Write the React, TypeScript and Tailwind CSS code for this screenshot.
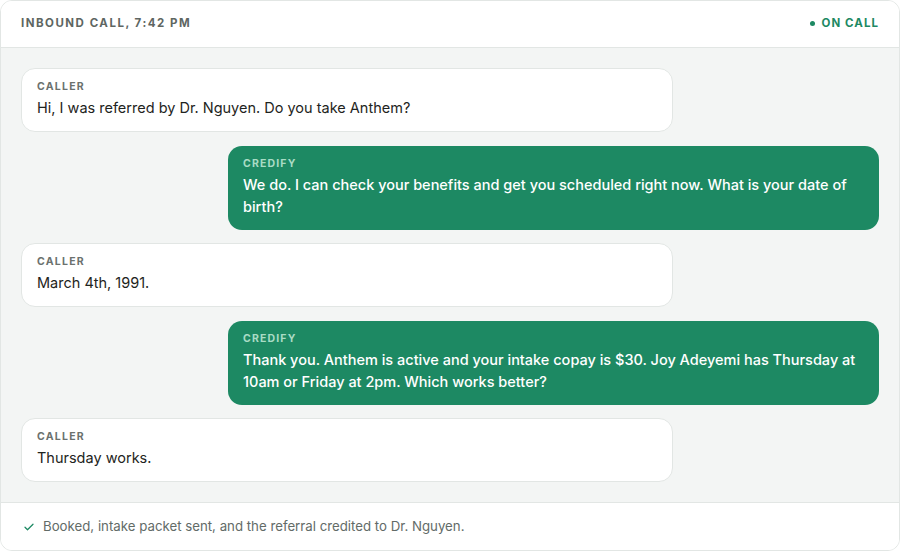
import React from "react";

type Msg = { from: "caller" | "credify"; text: string };

const messages: Msg[] = [
  { from: "caller", text: "Hi, I was referred by Dr. Nguyen. Do you take Anthem?" },
  {
    from: "credify",
    text: "We do. I can check your benefits and get you scheduled right now. What is your date of birth?",
  },
  { from: "caller", text: "March 4th, 1991." },
  {
    from: "credify",
    text: "Thank you. Anthem is active and your intake copay is $30. Joy Adeyemi has Thursday at 10am or Friday at 2pm. Which works better?",
  },
  { from: "caller", text: "Thursday works." },
];

function Bubble({ msg }: { msg: Msg }) {
  if (msg.from === "credify") {
    return (
      <div className="flex justify-end">
        <div className="w-[651px] rounded-[14px] bg-[#1d8963] px-[15px] pt-[11px] pb-[12px]">
          <div className="text-[10.5px] font-bold tracking-[0.11em] text-[#a9dcc5] leading-[14px]">CREDIFY</div>
          <p className="mt-[3px] text-[14.5px] leading-[22px] text-white font-medium">{msg.text}</p>
        </div>
      </div>
    );
  }
  return (
    <div className="flex justify-start">
      <div className="w-[652px] rounded-[14px] border border-[#e2e6e4] bg-white px-[15px] pt-[11px] pb-[12px]">
        <div className="text-[10.5px] font-bold tracking-[0.12em] text-[#6b716e] leading-[14px]">CALLER</div>
        <p className="mt-[3px] text-[14.5px] leading-[22px] text-[#1e2421]">{msg.text}</p>
      </div>
    </div>
  );
}

export default function App() {
  return (
    <div className="h-[551px] w-[900px] bg-white font-['Inter',sans-serif]">
      <div className="flex h-[551px] flex-col overflow-hidden rounded-[12px] border border-[#e2e6e4]">
        <header className="flex h-[47px] shrink-0 items-center justify-between border-b border-[#e2e6e4] bg-white px-[20px]">
          <span className="-mt-[1px] text-[11.5px] font-bold tracking-[0.13em] text-[#5e6662]">INBOUND CALL, 7:42 PM</span>
          <span className="-mt-[1px] flex items-center gap-[7px] text-[11.5px] font-bold tracking-[0.09em] text-[#1d8963]">
            <span className="h-[5px] w-[5px] rounded-full bg-[#1d8963]" />
            ON CALL
          </span>
        </header>
        <main className="flex flex-1 flex-col gap-[13.5px] bg-[#f3f5f4] px-[20px] pt-[20px]">
          {messages.map((m, i) => (
            <Bubble key={i} msg={m} />
          ))}
        </main>
        <footer className="flex h-[48px] shrink-0 items-center gap-[8px] border-t border-[#e2e6e4] bg-white px-[22px]">
          <svg width="12" height="12" viewBox="0 0 24 24" fill="none" stroke="#1d8963" strokeWidth="2.5" strokeLinecap="round" strokeLinejoin="round">
            <path d="M4 12.5l5 5L20 6.5" />
          </svg>
          <span className="text-[13.25px] text-[#626b67]">Booked, intake packet sent, and the referral credited to Dr. Nguyen.</span>
        </footer>
      </div>
    </div>
  );
}
